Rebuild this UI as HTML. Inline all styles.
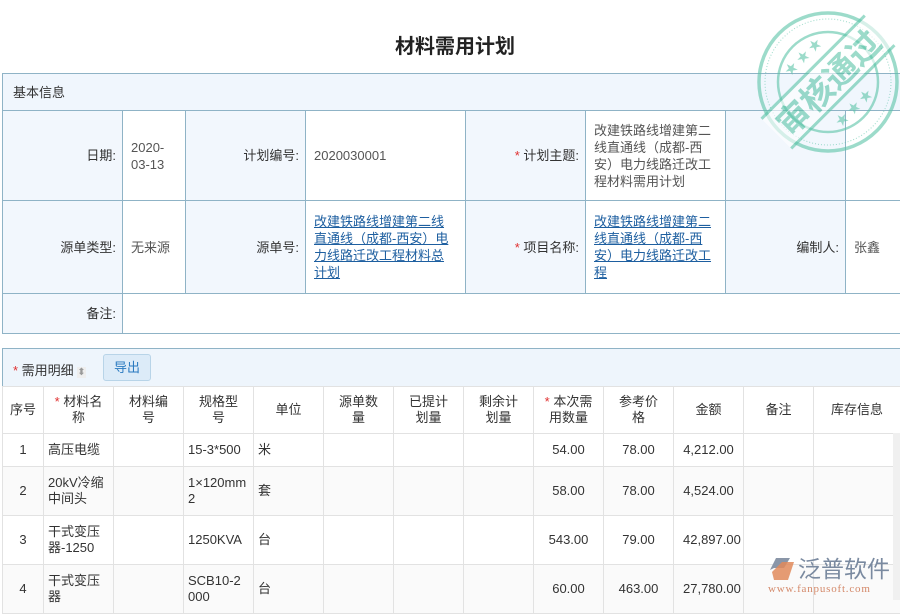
<!DOCTYPE html>
<html><head><meta charset="utf-8"><style>
*{box-sizing:border-box;margin:0;padding:0}
body{width:900px;height:600px;overflow:hidden;background:#fff;font-family:"Liberation Sans","Noto Sans CJK SC",sans-serif;font-size:12px;color:#333;position:relative}
.title{position:absolute;left:0;width:910px;top:30px;text-align:center;font-size:20px;font-weight:bold;color:#222}
table{border-collapse:collapse;position:absolute;table-layout:fixed}
#info{left:2px;top:73px;width:910px}
#info td{border:1px solid #8fb3c6;padding:0 6px;line-height:17px;font-size:13px}
#info .h{background:#f0f6fd;height:37px;padding-left:10px}
#info .l{background:#f2f7fd;text-align:right}
#info .v{background:#fff;color:#555;padding:0 9px 0 8px}
a{color:#1e5fa0;text-decoration:underline}
.r{color:#e03030}
#bar{position:absolute;left:2px;top:348px;width:910px;height:38px;background:#eef5fc;border:1px solid #8fb3c6;border-bottom:none}
#bar .t{position:absolute;left:10px;top:11px;font-size:13px}
#bar .btn{position:absolute;left:100px;top:5px;width:48px;height:27px;border:1px solid #b8d4e8;border-radius:3px;background:#dcebf8;color:#2a7ac0;text-align:center;line-height:25px;font-size:13px}
#det{left:2px;top:386px;width:898px}
#det td{border:1px solid #e2e2e2;text-align:center;font-size:13px;line-height:16px;padding:0 9px}
#det tr.hd td{height:47px;background:#fff;padding:0 10px}
#det td.lf{text-align:left;padding:0 4px}
#det tr.g td{background:#fafafa}
</style></head><body>
<div class="title">材料需用计划</div>
<table id="info">
<colgroup><col style="width:120px"><col style="width:63px"><col style="width:120px"><col style="width:160px"><col style="width:120px"><col style="width:140px"><col style="width:120px"><col style="width:67px"></colgroup>
<tr><td class="h" colspan="8">基本信息</td></tr>
<tr style="height:90px"><td class="l">日期:</td><td class="v">2020-<br>03-13</td><td class="l">计划编号:</td><td class="v">2020030001</td><td class="l"><span class="r">*</span> 计划主题:</td><td class="v">改建铁路线增建第二线直通线（成都-西安）电力线路迁改工程材料需用计划</td><td class="l"></td><td class="v"></td></tr>
<tr style="height:93px"><td class="l">源单类型:</td><td class="v">无来源</td><td class="l">源单号:</td><td class="v"><a>改建铁路线增建第二线直通线（成都-西安）电力线路迁改工程材料总计划</a></td><td class="l"><span class="r">*</span> 项目名称:</td><td class="v"><a>改建铁路线增建第二线直通线（成都-西安）电力线路迁改工程</a></td><td class="l">编制人:</td><td class="v">张鑫</td></tr>
<tr style="height:40px"><td class="l">备注:</td><td class="v" colspan="7"></td></tr>
</table>
<div id="bar"><span class="t"><span class="r">*</span> 需用明细 <span style="color:#999;background:#eee;font-size:10px">⬍</span></span><div class="btn">导出</div></div>
<table id="det">
<colgroup><col style="width:41px"><col style="width:70px"><col style="width:70px"><col style="width:70px"><col style="width:70px"><col style="width:70px"><col style="width:70px"><col style="width:70px"><col style="width:70px"><col style="width:70px"><col style="width:70px"><col style="width:70px"><col style="width:87px"></colgroup>
<tr class="hd"><td style="padding:0">序号</td><td><span class="r">*</span> 材料名称</td><td>材料编号</td><td>规格型号</td><td>单位</td><td>源单数量</td><td>已提计划量</td><td>剩余计划量</td><td><span class="r">*</span> 本次需用数量</td><td>参考价格</td><td>金额</td><td>备注</td><td style="padding:0">库存信息</td></tr>
<tr style="height:33px"><td>1</td><td class="lf">高压电缆</td><td></td><td class="lf">15-3*500</td><td class="lf">米</td><td></td><td></td><td></td><td>54.00</td><td>78.00</td><td>4,212.00</td><td></td><td></td></tr>
<tr class="g" style="height:49px"><td>2</td><td class="lf">20kV冷缩中间头</td><td></td><td class="lf">1×120mm<br>2</td><td class="lf">套</td><td></td><td></td><td></td><td>58.00</td><td>78.00</td><td>4,524.00</td><td></td><td></td></tr>
<tr style="height:49px"><td>3</td><td class="lf">干式变压<br>器-1250</td><td></td><td class="lf">1250KVA</td><td class="lf">台</td><td></td><td></td><td></td><td>543.00</td><td>79.00</td><td>42,897.00</td><td></td><td></td></tr>
<tr class="g" style="height:49px"><td>4</td><td class="lf">干式变压<br>器</td><td></td><td class="lf">SCB10-2<br>000</td><td class="lf">台</td><td></td><td></td><td></td><td>60.00</td><td>463.00</td><td>27,780.00</td><td></td><td></td></tr>
</table>
<div style="position:absolute;left:893px;top:433px;width:7px;height:167px;background:#f0f0f0"></div>
<svg style="position:absolute;left:753px;top:7px" width="150" height="150" viewBox="0 0 150 150">
<g fill="none" stroke="#5cc4a8" opacity="0.6">
<circle cx="75" cy="75" r="69" stroke-width="3.5"/>
<circle cx="75" cy="75" r="63" stroke-width="1" stroke-dasharray="1 2"/>
<circle cx="75" cy="75" r="50" stroke-width="2.5"/>
</g>
<g transform="rotate(-45 75 75)" opacity="0.6">
<rect x="2" y="55" width="146" height="40" fill="#fff"/>
<line x1="2" y1="54" x2="148" y2="54" stroke="#5cc4a8" stroke-width="3"/>
<line x1="2" y1="96" x2="148" y2="96" stroke="#5cc4a8" stroke-width="3"/>
<text x="75" y="88" text-anchor="middle" font-size="33" font-weight="bold" fill="#5cc4a8" font-family="Noto Sans CJK SC,sans-serif">审核通过</text>
<text x="75" y="44" text-anchor="middle" font-size="13" fill="#5cc4a8">★ ★ ★</text>
<text x="75" y="116" text-anchor="middle" font-size="13" fill="#5cc4a8">★ ★ ★</text>
</g>
</svg>
<div style="position:absolute;left:768px;top:552px;width:130px;height:45px;white-space:nowrap">
<svg width="28" height="26" style="position:absolute;left:0;top:4px"><path d="M8 2 H22 L16 12 H6 L2 14 Z" fill="#8a96a8"/><path d="M4 16 L14 6 L26 6 L20 24 H6 Z" fill="#e08a5a" opacity="0.85"/></svg>
<div style="position:absolute;left:30px;top:0;font-size:23px;color:#7a8aa0;font-family:'Noto Sans CJK SC',sans-serif;line-height:30px">泛普软件</div>
<div style="position:absolute;left:0;top:31px;font-size:11px;color:#d4896a;font-family:'Liberation Serif',serif;letter-spacing:0.8px">www.fanpusoft.com</div>
</div>
</body></html>
